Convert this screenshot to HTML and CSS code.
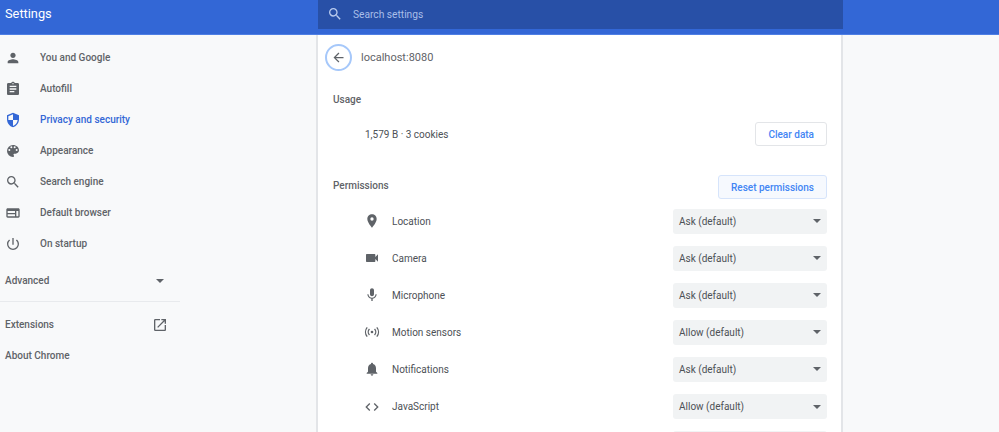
FILE: index.html
```html
<!DOCTYPE html>
<html lang="en">
<head>
  <meta charset="UTF-8">
  <title>Settings</title>
  <link rel="stylesheet" href="styles.css">
</head>
<body>
  <header class="topbar">
    <div class="topbar-title">Settings</div>
    <div class="search">
      <svg class="search-icon" viewBox="0 0 24 24"><path d="M15.5 14h-.79l-.28-.27A6.47 6.47 0 0 0 16 9.5 6.5 6.5 0 1 0 9.5 16c1.61 0 3.09-.59 4.23-1.57l.27.28v.79l5 4.99L20.49 19l-4.99-5zm-6 0C7.01 14 5 11.99 5 9.5S7.01 5 9.5 5 14 7.01 14 9.5 11.99 14 9.5 14z"/></svg>
      <span>Search settings</span>
    </div>
  </header>

  <div class="layout">
    <nav class="sidebar">
      <a class="nav-item">
        <svg viewBox="0 0 24 24"><path d="M12 12c2.21 0 4-1.79 4-4s-1.79-4-4-4-4 1.79-4 4 1.79 4 4 4zm0 2c-2.67 0-8 1.34-8 4v2h16v-2c0-2.66-5.33-4-8-4z"/></svg>
        You and Google
      </a>
      <a class="nav-item">
        <svg viewBox="0 0 24 24"><path d="M19 3h-4.18C14.4 1.84 13.3 1 12 1s-2.4.84-2.82 2H5c-1.1 0-2 .9-2 2v14c0 1.1.9 2 2 2h14c1.1 0 2-.9 2-2V5c0-1.1-.9-2-2-2zm-7 0c.55 0 1 .45 1 1s-.45 1-1 1-1-.45-1-1 .45-1 1-1zm2 14H7v-2h7v2zm3-4H7v-2h10v2zm0-4H7V7h10v2z"/></svg>
        Autofill
      </a>
      <a class="nav-item active">
        <svg viewBox="0 0 24 24"><path d="M12 1 3 5v6c0 5.55 3.84 10.74 9 12 5.16-1.26 9-6.45 9-12V5l-9-4zm0 10.99h7c-.53 4.12-3.28 7.79-7 8.94V12H5V6.3l7-3.11v8.8z"/></svg>
        Privacy and security
      </a>
      <a class="nav-item">
        <svg viewBox="0 0 24 24"><path d="M12 3a9 9 0 0 0 0 18c.83 0 1.5-.67 1.5-1.5 0-.39-.15-.74-.39-1.01-.23-.26-.38-.61-.38-.99 0-.83.67-1.5 1.5-1.5H16c2.76 0 5-2.24 5-5 0-4.42-4.03-8-9-8zm-5.5 9a1.5 1.5 0 1 1 0-3 1.5 1.5 0 0 1 0 3zm3-4a1.5 1.5 0 1 1 0-3 1.5 1.5 0 0 1 0 3zm5 0a1.5 1.5 0 1 1 0-3 1.5 1.5 0 0 1 0 3zm3 4a1.5 1.5 0 1 1 0-3 1.5 1.5 0 0 1 0 3z"/></svg>
        Appearance
      </a>
      <a class="nav-item">
        <svg viewBox="0 0 24 24"><path d="M15.5 14h-.79l-.28-.27A6.47 6.47 0 0 0 16 9.5 6.5 6.5 0 1 0 9.5 16c1.61 0 3.09-.59 4.23-1.57l.27.28v.79l5 4.99L20.49 19l-4.99-5zm-6 0C7.01 14 5 11.99 5 9.5S7.01 5 9.5 5 14 7.01 14 9.5 11.99 14 9.5 14z"/></svg>
        Search engine
      </a>
      <a class="nav-item">
        <svg viewBox="0 0 24 24"><path d="M20 5H4c-1.1 0-2 .9-2 2v10c0 1.1.9 2 2 2h16c1.1 0 2-.9 2-2V7c0-1.100-.9-2-2-2zM4 9h11v3H4V9zm0 8v-3h11v3H4zm16 0h-3V9h3v8z"/></svg>
        Default browser
      </a>
      <a class="nav-item">
        <svg viewBox="0 0 24 24"><path d="M13 3h-2v10h2V3zm4.830 2.170-1.420 1.420A6.920 6.920 0 0 1 19 12c0 3.870-3.130 7-7 7s-7-3.130-7-7c0-2.190 1.010-4.150 2.580-5.420L6.170 5.170A8.932 8.932 0 0 0 3 12a9 9 0 0 0 18 0c0-2.740-1.230-5.190-3.170-6.830z"/></svg>
        On startup
      </a>

      <div class="nav-advanced">
        <span>Advanced</span>
        <i class="caret"></i>
      </div>
      <div class="nav-sep"></div>
      <a class="nav-plain">
        <span>Extensions</span>
        <svg viewBox="0 0 24 24"><path d="M19 19H5V5h7V3H5a2 2 0 0 0-2 2v14a2 2 0 0 0 2 2h14c1.100 0 2-.9 2-2v-7h-2v7zM14 3v2h3.590l-9.830 9.830 1.410 1.410L19 6.410V10h2V3h-7z"/></svg>
      </a>
      <a class="nav-plain">About Chrome</a>
    </nav>

    <main class="card">
      <div class="site-head">
        <div class="back">
          <svg viewBox="0 0 24 24"><path d="M20 11H7.830l5.590-5.590L12 4l-8 8 8 8 1.410-1.410L7.830 13H20v-2z"/></svg>
        </div>
        <div class="site-name">localhost:8080</div>
      </div>

      <div class="section-title usage-title">Usage</div>
      <div class="usage-row">
        <span>1,579 B · 3 cookies</span>
        <button class="btn">Clear data</button>
      </div>

      <div class="perm-head">
        <div class="section-title perm-title">Permissions</div>
        <button class="btn btn-tint">Reset permissions</button>
      </div>

      <div class="perm-row">
        <svg viewBox="0 0 24 24"><path d="M12 2C8.130 2 5 5.130 5 9c0 5.250 7 13 7 13s7-7.750 7-13c0-3.870-3.130-7-7-7zm0 9.500a2.500 2.500 0 0 1 0-5 2.500 2.500 0 0 1 0 5z"/></svg>
        <span class="perm-label">Location</span>
        <div class="dropdown">Ask (default)<i class="caret"></i></div>
      </div>
      <div class="perm-row">
        <svg viewBox="0 0 24 24"><path d="M17 10.500V7c0-.55-.45-1-1-1H4c-.55 0-1 .45-1 1v10c0 .55.45 1 1 1h12c.55 0 1-.45 1-1v-3.500l4 4v-11l-4 4z"/></svg>
        <span class="perm-label">Camera</span>
        <div class="dropdown">Ask (default)<i class="caret"></i></div>
      </div>
      <div class="perm-row">
        <svg viewBox="0 0 24 24"><path d="M12 14c1.660 0 2.990-1.340 2.990-3L15 5c0-1.660-1.340-3-3-3S9 3.340 9 5v6c0 1.660 1.340 3 3 3zm5.300-3c0 3-2.540 5.100-5.300 5.100S6.700 14 6.700 11H5c0 3.410 2.720 6.230 6 6.720V21h2v-3.280c3.280-.48 6-3.300 6-6.720h-1.700z"/></svg>
        <span class="perm-label">Microphone</span>
        <div class="dropdown">Ask (default)<i class="caret"></i></div>
      </div>
      <div class="perm-row">
        <svg viewBox="0 0 24 24"><circle cx="12" cy="12" r="2"/><path d="M8.200 7.500a6.500 6.500 0 0 0 0 9M15.800 7.500a6.500 6.500 0 0 1 0 9M4.800 5a11 11 0 0 0 0 14M19.200 5a11 11 0 0 1 0 14" fill="none" stroke="#5f6368" stroke-width="2"/></svg>
        <span class="perm-label">Motion sensors</span>
        <div class="dropdown">Allow (default)<i class="caret"></i></div>
      </div>
      <div class="perm-row">
        <svg viewBox="0 0 24 24"><path d="M12 22c1.100 0 2-.9 2-2h-4c0 1.100.9 2 2 2zm6-6v-5c0-3.070-1.630-5.640-4.500-6.320V4c0-.83-.67-1.500-1.500-1.500s-1.500.67-1.500 1.500v.68C7.640 5.360 6 7.920 6 11v5l-2 2v1h16v-1l-2-2z"/></svg>
        <span class="perm-label">Notifications</span>
        <div class="dropdown">Ask (default)<i class="caret"></i></div>
      </div>
      <div class="perm-row">
        <svg viewBox="0 0 24 24"><path d="M9.400 16.600 4.800 12l4.600-4.600L8 6l-6 6 6 6 1.400-1.400zm5.200 0 4.600-4.600-4.600-4.600L16 6l6 6-6 6-1.400-1.400z"/></svg>
        <span class="perm-label">JavaScript</span>
        <div class="dropdown">Allow (default)<i class="caret"></i></div>
      </div>
      <div class="perm-row">
        <span class="perm-label"></span>
        <div class="dropdown"></div>
      </div>
    </main>
  </div>
</body>
</html>
```

FILE: styles.css
```css
* {
  box-sizing: border-box;
}
html, body {
  height: 432px;
  overflow: hidden;
}
body {
  margin: 0;
  font-family: Roboto, "Liberation Sans", sans-serif;
  font-size: 10px;
  color: #5f6368;
  background: #f8f9fa;
}
svg {
  fill: #5f6368;
  flex: none;
}
.topbar {
  display: flex;
  align-items: flex-start;
  height: 35px;
  background: #3367d6;
  border-bottom: 1px solid #4f7fe4;
}
.topbar-title {
  width: 318px;
  padding: 6px 0 0 5px;
  font-size: 12.8px;
  color: #fff;
}
.search {
  display: flex;
  align-items: center;
  width: 525px;
  height: 29px;
  padding-left: 9px;
  padding-bottom: 1px;
  font-size: 10.2px;
  background: #2850a7;
  color: #a9bfe9;
}
.search-icon {
  width: 16px;
  height: 16px;
  margin-right: 10px;
  fill: #b9cbee;
}
.layout {
  display: flex;
  height: 397px;
}
.sidebar {
  width: 316px;
  padding-top: 7px;
}
.nav-item {
  display: flex;
  align-items: center;
  width: 180px;
  height: 31px;
  padding-left: 5px;
  font-weight: 500;
}
.nav-item svg {
  width: 16px;
  height: 16px;
  margin-right: 19px;
}
.nav-item.active {
  color: #3367d6;
}
.nav-item.active svg {
  fill: #3367d6;
}
.nav-advanced {
  display: flex;
  align-items: center;
  justify-content: space-between;
  width: 180px;
  height: 31px;
  margin-top: 6px;
  padding: 0 16px 0 5px;
  font-weight: 500;
}
.nav-sep {
  width: 180px;
  height: 1px;
  margin: 5px 0 7px;
  background: #e8eaed;
}
.nav-plain {
  display: flex;
  align-items: center;
  justify-content: space-between;
  width: 180px;
  height: 31px;
  padding: 0 12px 0 5px;
  font-weight: 500;
}
.nav-plain svg {
  width: 16px;
  height: 16px;
}
.caret {
  display: block;
  width: 0;
  height: 0;
  border-left: 4px solid transparent;
  border-right: 4px solid transparent;
  border-top: 4px solid #5f6368;
}
.card {
  width: 527px;
  padding: 0 14px 0 15px;
  background: #fff;
  border-left: 2px solid #e3e5e8;
  border-right: 2px solid #e3e5e8;
}
.site-head {
  display: flex;
  align-items: center;
  height: 44px;
  margin-left: -8px;
}
.back {
  display: flex;
  align-items: center;
  justify-content: center;
  width: 27px;
  height: 27px;
  margin-right: 9px;
  border: 2px solid #a6c8fa;
  border-radius: 50%;
}
.back svg {
  width: 15px;
  height: 15px;
}
.site-name {
  font-size: 11px;
}
.section-title {
  font-weight: 500;
}
.usage-title {
  margin-top: 14px;
  line-height: 14px;
}
.usage-row {
  display: flex;
  align-items: center;
  justify-content: space-between;
  height: 24px;
  margin-top: 15px;
  padding-left: 32px;
  color: #4d5156;
}
.btn {
  height: 24px;
  padding: 0 12px;
  font: 500 10px Roboto, sans-serif;
  color: #4285f4;
  background: #fff;
  border: 1px solid #e3e5e8;
  border-radius: 3px;
}
.btn-tint {
  background: #f6f9fe;
  border-color: #d6e4fb;
}
.perm-head {
  display: flex;
  align-items: center;
  justify-content: space-between;
  height: 24px;
  margin-top: 29px;
  margin-bottom: 3.5px;
}
.perm-title {
  padding-bottom: 4px;
}
.perm-row {
  display: flex;
  align-items: center;
  height: 37.1px;
  padding-left: 31px;
  color: #4d5156;
}
.perm-row svg {
  width: 16px;
  height: 16px;
  margin-right: 12px;
}
.perm-label {
  flex: 1;
}
.dropdown {
  display: flex;
  align-items: center;
  justify-content: space-between;
  width: 154px;
  height: 25px;
  padding: 0 6px;
  background: #f1f3f4;
  border-radius: 3px;
  color: #4d5156;
}
```
